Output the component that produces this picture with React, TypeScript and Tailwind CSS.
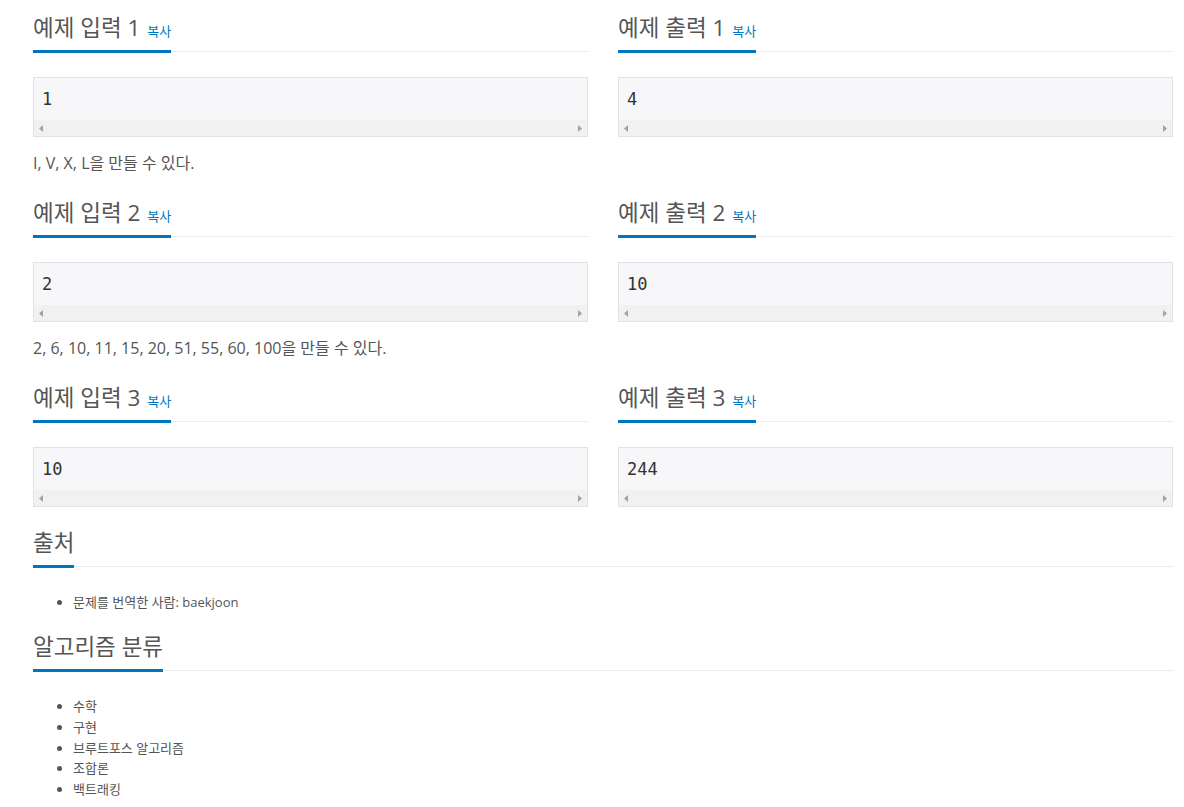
const font = { fontFamily: '"Open Sans", "Noto Sans CJK KR", sans-serif' };

function Headline({ title, copy }: { title: string; copy?: boolean }) {
  return (
    <div className="mt-[10px] mb-[25px] flex items-end border-b border-dotted border-[#dcdcdc]">
      <h2 className="-mb-[2px] h-[39px] overflow-visible border-b-[3px] border-[#0076c0] pb-[8px] text-[22.5px] leading-[28px] font-normal whitespace-nowrap text-[#555]">
        {title}
        {copy && <a className="ml-[7px] text-[13px] leading-[28px] text-[#0076c0]">복사</a>}
      </h2>
    </div>
  );
}

function Sample({ value }: { value: string }) {
  return (
    <div className="border border-[#e1e1e8] bg-[#f7f7f9]">
      <pre className="px-[8px] pt-[9px] pb-[9px] text-[17px] leading-[24px] text-[#333]" style={{ fontFamily: '"DejaVu Sans Mono", monospace' }}>
        {value}
      </pre>
      <div className="flex h-[16px] items-center justify-between bg-[#f1f1f1] px-[5px]">
        <svg width="4" height="7" viewBox="0 0 4 7">
          <path d="M4 0 L0 3.5 L4 7 Z" fill="#a3a3a3" />
        </svg>
        <svg width="4" height="7" viewBox="0 0 4 7">
          <path d="M0 0 L4 3.5 L0 7 Z" fill="#a3a3a3" />
        </svg>
      </div>
    </div>
  );
}

const samples = [
  { n: 1, input: '1', output: '4', note: 'I, V, X, L을 만들 수 있다.' },
  { n: 2, input: '2', output: '10', note: '2, 6, 10, 11, 15, 20, 51, 55, 60, 100을 만들 수 있다.' },
  { n: 3, input: '10', output: '244', note: '' },
];

const tags = ['수학', '구현', '브루트포스 알고리즘', '조합론', '백트래킹'];

export default function App() {
  return (
    <div className="min-h-[807px] bg-white pl-[33px] pr-[11px] pt-[4px]" style={font}>
      {samples.map(s => (
        <div key={s.n} className="grid grid-cols-2 gap-x-[30px]">
          <section>
            <Headline title={`예제 입력 ${s.n}`} copy />
            <Sample value={s.input} />
            {s.note && (
              <p className="mt-[15px] mb-[15px] text-[16px] leading-[22px] text-[#555]">{s.note}</p>
            )}
          </section>
          <section>
            <Headline title={`예제 출력 ${s.n}`} copy />
            <Sample value={s.output} />
          </section>
        </div>
      ))}

      <section className="mt-[22px]">
        <Headline title="출처" />
        <ul className="list-disc pl-[40px] text-[13px] leading-[21px] text-[#555]">
          <li>문제를 번역한 사람: baekjoon</li>
        </ul>
      </section>

      <section className="mt-[20px]">
        <Headline title="알고리즘 분류" />
        <ul className="list-disc pl-[40px] text-[13px] leading-[20.75px] text-[#555]">
          {tags.map(t => (
            <li key={t}>{t}</li>
          ))}
        </ul>
      </section>
    </div>
  );
}
